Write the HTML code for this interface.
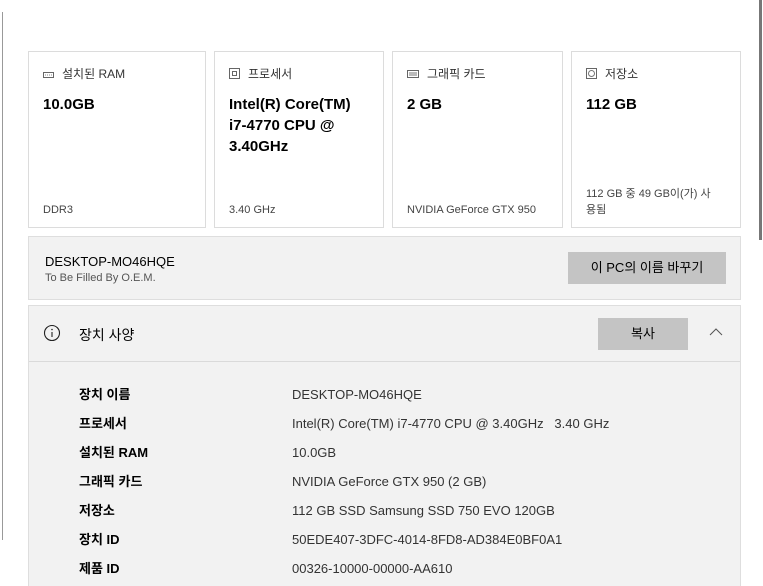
<!DOCTYPE html>
<html><head><meta charset="utf-8"><style>
*{margin:0;padding:0;box-sizing:border-box}
html,body{width:763px;height:586px;overflow:hidden}
body{background:#fff;position:relative;font-family:"Liberation Sans","Noto Sans CJK KR",sans-serif;color:#000}
.abs{position:absolute}
.card{position:absolute;top:51px;height:177px;border:1px solid #dcdcdc;background:#fff}
.ct{position:absolute;left:14px;top:13px;font-size:12px;color:#333;white-space:nowrap}
.ct svg{vertical-align:-1px;margin-right:8px}
.cv{position:absolute;left:14px;top:42px;font-size:15px;font-weight:bold;line-height:21px}
.cb{position:absolute;left:14px;bottom:9px;font-size:11px;color:#444;line-height:16px}
.row{position:absolute;font-size:13px;white-space:nowrap;line-height:16px}
.lab{left:79px;font-weight:bold}
.val{left:292px;color:#333}
</style></head><body>
<div class="abs" style="left:2px;top:12px;width:1px;height:528px;background:#999"></div>
<div class="abs" style="left:759px;top:0;width:3px;height:240px;background:#777"></div>

<div class="card" style="left:28px;width:178px">
<div class="ct"><svg width="11" height="8"><rect x="0.5" y="1.5" width="10" height="5" fill="none" stroke="#666"/><line x1="2" y1="4" x2="9" y2="4" stroke="#888" stroke-dasharray="1 1"/></svg>설치된 RAM</div>
<div class="cv">10.0GB</div><div class="cb">DDR3</div></div>
<div class="card" style="left:214px;width:170px">
<div class="ct"><svg width="11" height="11"><rect x="0.5" y="0.5" width="10" height="10" fill="none" stroke="#666"/><rect x="3.5" y="3.5" width="4" height="4" fill="none" stroke="#666"/></svg>프로세서</div>
<div class="cv">Intel(R) Core(TM)<br>i7-4770 CPU @<br>3.40GHz</div><div class="cb">3.40 GHz</div></div>
<div class="card" style="left:392px;width:171px">
<div class="ct"><svg width="12" height="10"><rect x="0.5" y="1.5" width="11" height="7" fill="none" stroke="#666"/><rect x="2" y="3" width="8" height="4" fill="#bbb"/></svg>그래픽 카드</div>
<div class="cv">2 GB</div><div class="cb">NVIDIA GeForce GTX 950</div></div>
<div class="card" style="left:571px;width:170px">
<div class="ct"><svg width="11" height="11"><rect x="0.5" y="0.5" width="10" height="10" fill="none" stroke="#666"/><circle cx="5.5" cy="5.5" r="3" fill="none" stroke="#777"/></svg>저장소</div>
<div class="cv">112 GB</div><div class="cb">112 GB 중 49 GB이(가) 사<br>용됨</div></div>

<div class="abs" style="left:28px;top:236px;width:713px;height:64px;background:#f2f2f2;border:1px solid #dedede">
<div class="abs" style="left:16px;top:17px;font-size:13px">DESKTOP-MO46HQE</div>
<div class="abs" style="left:16px;top:35px;font-size:11px;color:#555">To Be Filled By O.E.M.</div>
<div class="abs" style="left:539px;top:15px;width:158px;height:32px;background:#c4c4c4;font-size:13px;text-align:center;line-height:32px">이 PC의 이름 바꾸기</div>
</div>

<div class="abs" style="left:28px;top:305px;width:713px;height:290px;background:#f2f2f2;border:1px solid #dedede">
<div class="abs" style="left:0;top:0;width:711px;height:56px;border-bottom:1px solid #dadada"></div>
<svg class="abs" style="left:14px;top:18px" width="18" height="18"><circle cx="9" cy="9" r="7.5" fill="none" stroke="#222" stroke-width="1.1"/><line x1="9" y1="8" x2="9" y2="13" stroke="#222" stroke-width="1.1"/><circle cx="9" cy="5.5" r="0.8" fill="#222"/></svg>
<div class="abs" style="left:50px;top:19px;font-size:14px">장치 사양</div>
<div class="abs" style="left:569px;top:12px;width:90px;height:32px;background:#c4c4c4;font-size:13px;text-align:center;line-height:32px">복사</div>
<svg class="abs" style="left:680px;top:21px" width="14" height="9"><polyline points="1,8 7,2 13,8" fill="none" stroke="#555" stroke-width="1"/></svg>
</div>

<div class="row lab" style="top:387px">장치 이름</div><div class="row val" style="top:387px">DESKTOP-MO46HQE</div>
<div class="row lab" style="top:416px">프로세서</div><div class="row val" style="top:416px">Intel(R) Core(TM) i7-4770 CPU @ 3.40GHz &nbsp; 3.40 GHz</div>
<div class="row lab" style="top:445px">설치된 RAM</div><div class="row val" style="top:445px">10.0GB</div>
<div class="row lab" style="top:474px">그래픽 카드</div><div class="row val" style="top:474px">NVIDIA GeForce GTX 950 (2 GB)</div>
<div class="row lab" style="top:503px">저장소</div><div class="row val" style="top:503px">112 GB SSD Samsung SSD 750 EVO 120GB</div>
<div class="row lab" style="top:532px">장치 ID</div><div class="row val" style="top:532px">50EDE407-3DFC-4014-8FD8-AD384E0BF0A1</div>
<div class="row lab" style="top:561px">제품 ID</div><div class="row val" style="top:561px">00326-10000-00000-AA610</div>
</body></html>
